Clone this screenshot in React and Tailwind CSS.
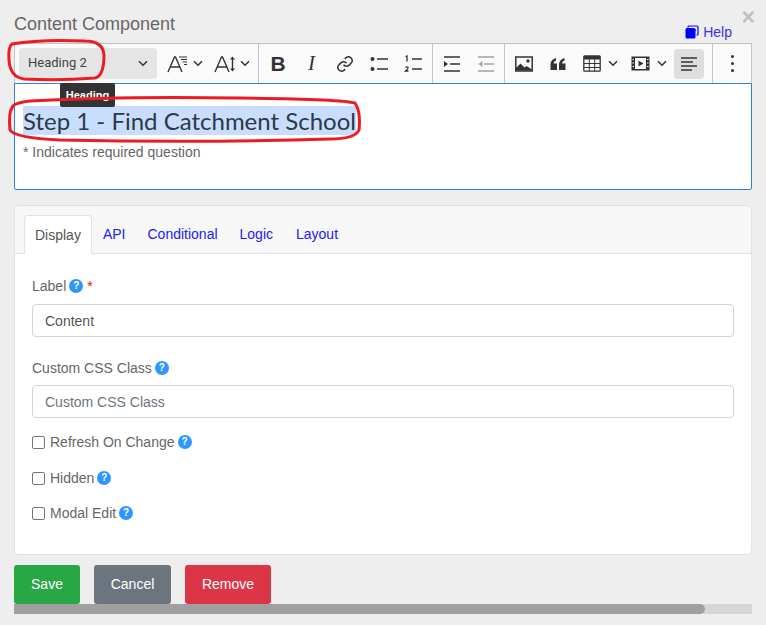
const Chevron = () => (
  <svg width="10" height="7" viewBox="0 0 10 7" fill="none" stroke="#333" strokeWidth="1.5" className="shrink-0">
    <path d="M1 1.200 5 5.200 9 1.200" />
  </svg>
);

const HelpDot = () => (
  <span className="inline-flex items-center justify-center w-[14px] h-[14px] rounded-full bg-[#2e97ff] text-white text-[10px] font-bold leading-none shrink-0">
    ?
  </span>
);

/* ──── Toolbar icons ──── */
const I = ({ w = 20, h = 20, children }) => (
  <svg width={w} height={h} viewBox={`0 0 ${w} ${h}`} className="shrink-0">
    {children}
  </svg>
);

const FontStyleIcon = () => (
  <I w={21} h={20}>
    <path d="M1 18 7.500 3h1L15 18M3.500 13h9.500" fill="none" stroke="#333" strokeWidth="1.400" />
    <path d="M12 3h8M14 5.500h6M15.500 8h4.500M17 10.500h3" fill="none" stroke="#333" strokeWidth="1" />
  </I>
);

const LineHeightIcon = () => (
  <I w={21} h={20}>
    <path d="M1 18 7.500 3h1L15 18M3.500 13h9.500" fill="none" stroke="#333" strokeWidth="1.400" />
    <path d="M18.500 4v12" stroke="#333" strokeWidth="1.400" />
    <path d="M16 5.500 18.500 2.500 21 5.500zM16 14.500 18.500 17.500 21 14.500z" fill="#333" />
  </I>
);

const BulletIcon = () => (
  <I>
    <circle cx="3.500" cy="5" r="2" fill="#333" />
    <circle cx="3.500" cy="15" r="2" fill="#333" />
    <path d="M8 5h11M8 15h11" stroke="#333" strokeWidth="1.500" />
  </I>
);

const NumberIcon = () => (
  <I>
    <path d="M10 5h10M10 15h10" stroke="#333" strokeWidth="1.500" />
    <path d="M3.500 2.500 5 2v5.500M3.500 13.500q1.500-1.200 2.500-.2 .6 1-2.500 3.700h3" fill="none" stroke="#333" strokeWidth="1.300" />
  </I>
);

const IndentIcon = ({ color = '#333', flip = false }) => (
  <I w={18} h={16}>
    <path d="M1 1h16M7 8h10M1 15h16" stroke={color} strokeWidth="1.500" fill="none" />
    <path d={flip ? 'M5.500 5 1.500 8 5.500 11z' : 'M1 5 5 8 1 11z'} fill={color} />
  </I>
);

const ImageIcon = () => (
  <I w={18} h={16}>
    <rect x="0.800" y="1" width="16.400" height="14" fill="none" stroke="#333" strokeWidth="1.500" />
    <circle cx="13" cy="5" r="1.700" fill="#333" />
    <path d="M1 14.500V12l4.500-4.500 4 4 2-1.500 5.500 3.500v1z" fill="#333" />
  </I>
);

const QuoteIcon = () => (
  <I w={16} h={14}>
    <path d="M0.500 13V7.500Q0.500 2.500 6 1v2.500Q3.800 4.200 3.500 6.500H7V13zM9 13V7.500Q9 2.500 14.500 1v2.500Q12.300 4.200 12 6.500H15.500V13z" fill="#333" />
  </I>
);

const TableIcon = () => (
  <I w={18} h={17}>
    <rect x="0.800" y="0.800" width="16.400" height="15.400" rx="1" fill="none" stroke="#333" strokeWidth="1.300" />
    <path d="M1 1h16v3.500H1z" fill="#333" />
    <path d="M1 8.500h16M1 12.500h16M6.300 4v12.500M11.700 4v12.500" stroke="#333" strokeWidth="1" />
  </I>
);

const MediaIcon = () => (
  <I w={19} h={15}>
    <rect x="0.500" y="0.500" width="18" height="14" fill="#333" />
    <rect x="4" y="2" width="11" height="11" fill="#fafafa" />
    <path d="M7.500 4.500 12.500 7.500 7.500 10.500z" fill="#333" />
    <path d="M1.500 3.500h1.500M1.500 7h1.500M1.500 10.500h1.500M16 3.500h1.500M16 7h1.500M16 10.500h1.500" stroke="#fafafa" strokeWidth="1.200" />
  </I>
);

const AlignIcon = () => (
  <I w={17} h={14}>
    <path d="M0 1h16M0 5h12M0 9h16M0 13h11" stroke="#333" strokeWidth="1.300" />
  </I>
);

const ToolBtn = ({ w, children }) => (
  <div className={`flex items-center justify-center h-full shrink-0 ${w}`}>{children}</div>
);

const Sep = () => <div className="w-px h-full bg-[#c4c4c4] shrink-0" />;

const Toolbar = () => (
  <div className="flex items-center h-[40px] border border-[#c4c4c4] border-b-0 bg-[#fafafa] text-[#333]">
    <div className="flex items-center h-full w-[243px] shrink-0 pl-1">
      <div className="flex items-center justify-between w-[138px] h-[31px] bg-[#e5e5e5] rounded-sm pl-[9px] pr-[9px] text-[13px] font-['Roboto',sans-serif] text-[#444]">
        <span className="-mt-[2px]">Heading 2</span>
        <Chevron />
      </div>
      <div className="flex items-center gap-[5px] ml-[10px]">
        <FontStyleIcon />
        <Chevron />
      </div>
      <div className="flex items-center gap-[5px] ml-[11px]">
        <LineHeightIcon />
        <Chevron />
      </div>
    </div>
    <Sep />
    <div className="flex items-center h-full w-[173px] shrink-0 px-[2px]">
      <ToolBtn w="w-[34px]">
        <span className="font-['Liberation_Sans',sans-serif] font-bold text-[21px] leading-none">B</span>
      </ToolBtn>
      <ToolBtn w="w-[33px]">
        <span className="font-['Liberation_Serif',serif] italic text-[21px] leading-none">I</span>
      </ToolBtn>
      <ToolBtn w="w-[34px]">
        <svg width="18" height="18" viewBox="0 0 24 24" fill="none" stroke="#333" strokeWidth="2">
          <path d="M10 13a5 5 0 0 0 7.500.5l3-3a5 5 0 0 0-7-7l-1.700 1.700" />
          <path d="M14 11a5 5 0 0 0-7.500-.5l-3 3a5 5 0 0 0 7 7l1.700-1.700" />
        </svg>
      </ToolBtn>
      <ToolBtn w="w-[33px]">
        <BulletIcon />
      </ToolBtn>
      <ToolBtn w="w-[34px]">
        <NumberIcon />
      </ToolBtn>
    </div>
    <Sep />
    <div className="flex items-center h-full w-[71px] shrink-0 pl-[2px]">
      <ToolBtn w="w-[34px]">
        <IndentIcon />
      </ToolBtn>
      <ToolBtn w="w-[34px]">
        <IndentIcon color="#a0a0a0" flip />
      </ToolBtn>
    </div>
    <Sep />
    <div className="flex items-center h-full w-[207px] shrink-0 pl-[2px]">
      <ToolBtn w="w-[34px]">
        <ImageIcon />
      </ToolBtn>
      <ToolBtn w="w-[34px]">
        <QuoteIcon />
      </ToolBtn>
      <div className="flex items-center gap-[7px] ml-[8px] w-[46px]">
        <TableIcon />
        <Chevron />
      </div>
      <div className="flex items-center gap-[7px] ml-[2px] w-[43px]">
        <MediaIcon />
        <Chevron />
      </div>
      <div className="flex items-center justify-center w-[30px] h-[30px] bg-[#dedede] rounded-sm">
        <AlignIcon />
      </div>
    </div>
    <Sep />
    <div className="flex-1 flex flex-col items-center justify-center gap-[4px]">
      <span className="w-[3px] h-[3px] rounded-full bg-[#333]" />
      <span className="w-[3px] h-[3px] rounded-full bg-[#333]" />
      <span className="w-[3px] h-[3px] rounded-full bg-[#333]" />
    </div>
  </div>
);

const Field = ({ label, star, value, placeholder, className, inputGap }) => (
  <div className={className}>
    <div className="flex items-center gap-[3px] h-[22px] text-[#666]">
      <span>{label}</span>
      <HelpDot />
      {star && <span className="text-[#f00] ml-[1px]">*</span>}
    </div>
    <input
      readOnly
      value={value}
      placeholder={placeholder}
      className={`block w-full h-[33px] px-3 bg-white border border-[#ced4da] rounded text-[#555] placeholder:text-[#6c757d] outline-none ${inputGap}`}
    />
  </div>
);

const Check = ({ label, className }) => (
  <div className={`flex items-center h-[20px] text-[#666] ${className}`}>
    <span className="w-[13px] h-[13px] border border-[#767676] rounded-[2px] bg-white shrink-0 mr-[5px]" />
    <span className="mr-[3px]">{label}</span>
    <HelpDot />
  </div>
);

export default function App() {
  const tabs = [
    { label: 'API', cls: 'px-[11px]' },
    { label: 'Conditional', cls: 'pl-[11px] pr-[11px]' },
    { label: 'Logic', cls: 'px-[11px]' },
    { label: 'Layout', cls: 'pl-[12px] pr-[11px]' },
  ];

  return (
    <div className="relative w-[766px] h-[625px] overflow-hidden bg-[#eeeeee] px-[14px] font-['Liberation_Sans',sans-serif] text-[14px]">
      {/* ──── Title row ──── */}
      <div className="relative h-[43px]">
        <h1 className="pt-[13px] text-[18px] leading-[22px] text-[#666]">Content Component</h1>
        <a className="absolute right-[20px] top-[22px] flex items-center gap-[4px] text-[14px] leading-[20px] text-[#3333ee]">
          <svg width="14" height="14" viewBox="0 0 14 14">
            <rect x="0.500" y="3" width="10" height="10.500" rx="1.500" fill="#0000ff" />
            <path d="M3 2.500V2q0-1 1-1h8q1 0 1 1v7q0 1-1 1h-.500M3 5h8" fill="none" stroke="#0000ff" strokeWidth="1.200" />
          </svg>
          Help
        </a>
        <span className="absolute right-[-3px] top-[6px] text-[23px] leading-[22px] font-bold text-[#c0c0c0]">×</span>
      </div>

      <Toolbar />

      {/* ──── Editor ──── */}
      <div className="h-[107px] bg-white border border-[#2a85d8] rounded-b-[2px] pl-[8px] pt-[22px]">
        <div className="font-['Lato',sans-serif] text-[24px] leading-[29px] text-[#2b3a45]">
          <span className="bg-[#c9deff]">Step 1 - Find Catchment School</span>
        </div>
        <p className="mt-[7px] text-[14px] leading-[20px] text-[#666]">* Indicates required question</p>
      </div>

      {/* ──── Settings card ──── */}
      <div className="mt-[15px] h-[350px] bg-white border border-[#e2e2e2] rounded-[4px] overflow-hidden">
        <div className="flex items-end h-[48px] pl-[9px] bg-[#f7f7f7] border-b border-[#dee2e6]">
          <div className="flex items-center h-[39px] -mb-px pt-[1px] px-[10px] bg-white border border-[#dee2e6] border-b-white rounded-t-[4px] text-[#555]">
            Display
          </div>
          {tabs.map((tab) => (
            <div key={tab.label} className={`flex items-center h-[39px] pt-[1px] text-[#2222ee] ${tab.cls}`}>
              {tab.label}
            </div>
          ))}
        </div>
        <div className="px-[17px]">
          <Field label="Label" star value="Content" className="mt-[21px]" inputGap="mt-[7px]" />
          <Field label="Custom CSS Class" value="" placeholder="Custom CSS Class" className="mt-[20px]" inputGap="mt-[6px]" />
          <Check label="Refresh On Change" className="mt-[14px]" />
          <Check label="Hidden" className="mt-[16px]" />
          <Check label="Modal Edit" className="mt-[15px]" />
        </div>
      </div>

      {/* ──── Actions ──── */}
      <div className="flex gap-[14px] mt-[10px] text-white">
        <button className="h-[39px] w-[66px] rounded-[3px] bg-[#28a745]">Save</button>
        <button className="h-[39px] w-[77px] rounded-[3px] bg-[#6c757d]">Cancel</button>
        <button className="h-[39px] w-[86px] rounded-[3px] bg-[#dc3545]">Remove</button>
      </div>

      {/* ──── Scrollbar ──── */}
      <div className="h-[10px] bg-[#d6d6d6]">
        <div className="h-full w-[691px] bg-[#a0a0a0] rounded-r-[5px]" />
      </div>

      {/* ──── Tooltip ──── */}
      <div className="absolute left-[60px] top-[83px] w-[55px] h-[24px] bg-[#333] rounded-[2px] text-white text-[11px] font-bold flex items-center justify-center">
        Heading
      </div>

      {/* ──── Red annotations ──── */}
      <svg width="766" height="625" className="absolute inset-0 pointer-events-none" fill="none" stroke="#ed1c24" strokeWidth="3">
        <path d="M12 44Q40 39 85 41Q103 41 104 55Q104 76 95 78Q60 81 24 79Q10 77 9 60Q8 47 12 44Z" />
        <path d="M30 101Q120 96 240 98Q340 99 355 103Q361 112 359 130Q355 139 330 139Q200 143 60 140Q15 138 10 130Q8 110 14 105Q20 102 30 101Z" />
      </svg>
    </div>
  );
}
